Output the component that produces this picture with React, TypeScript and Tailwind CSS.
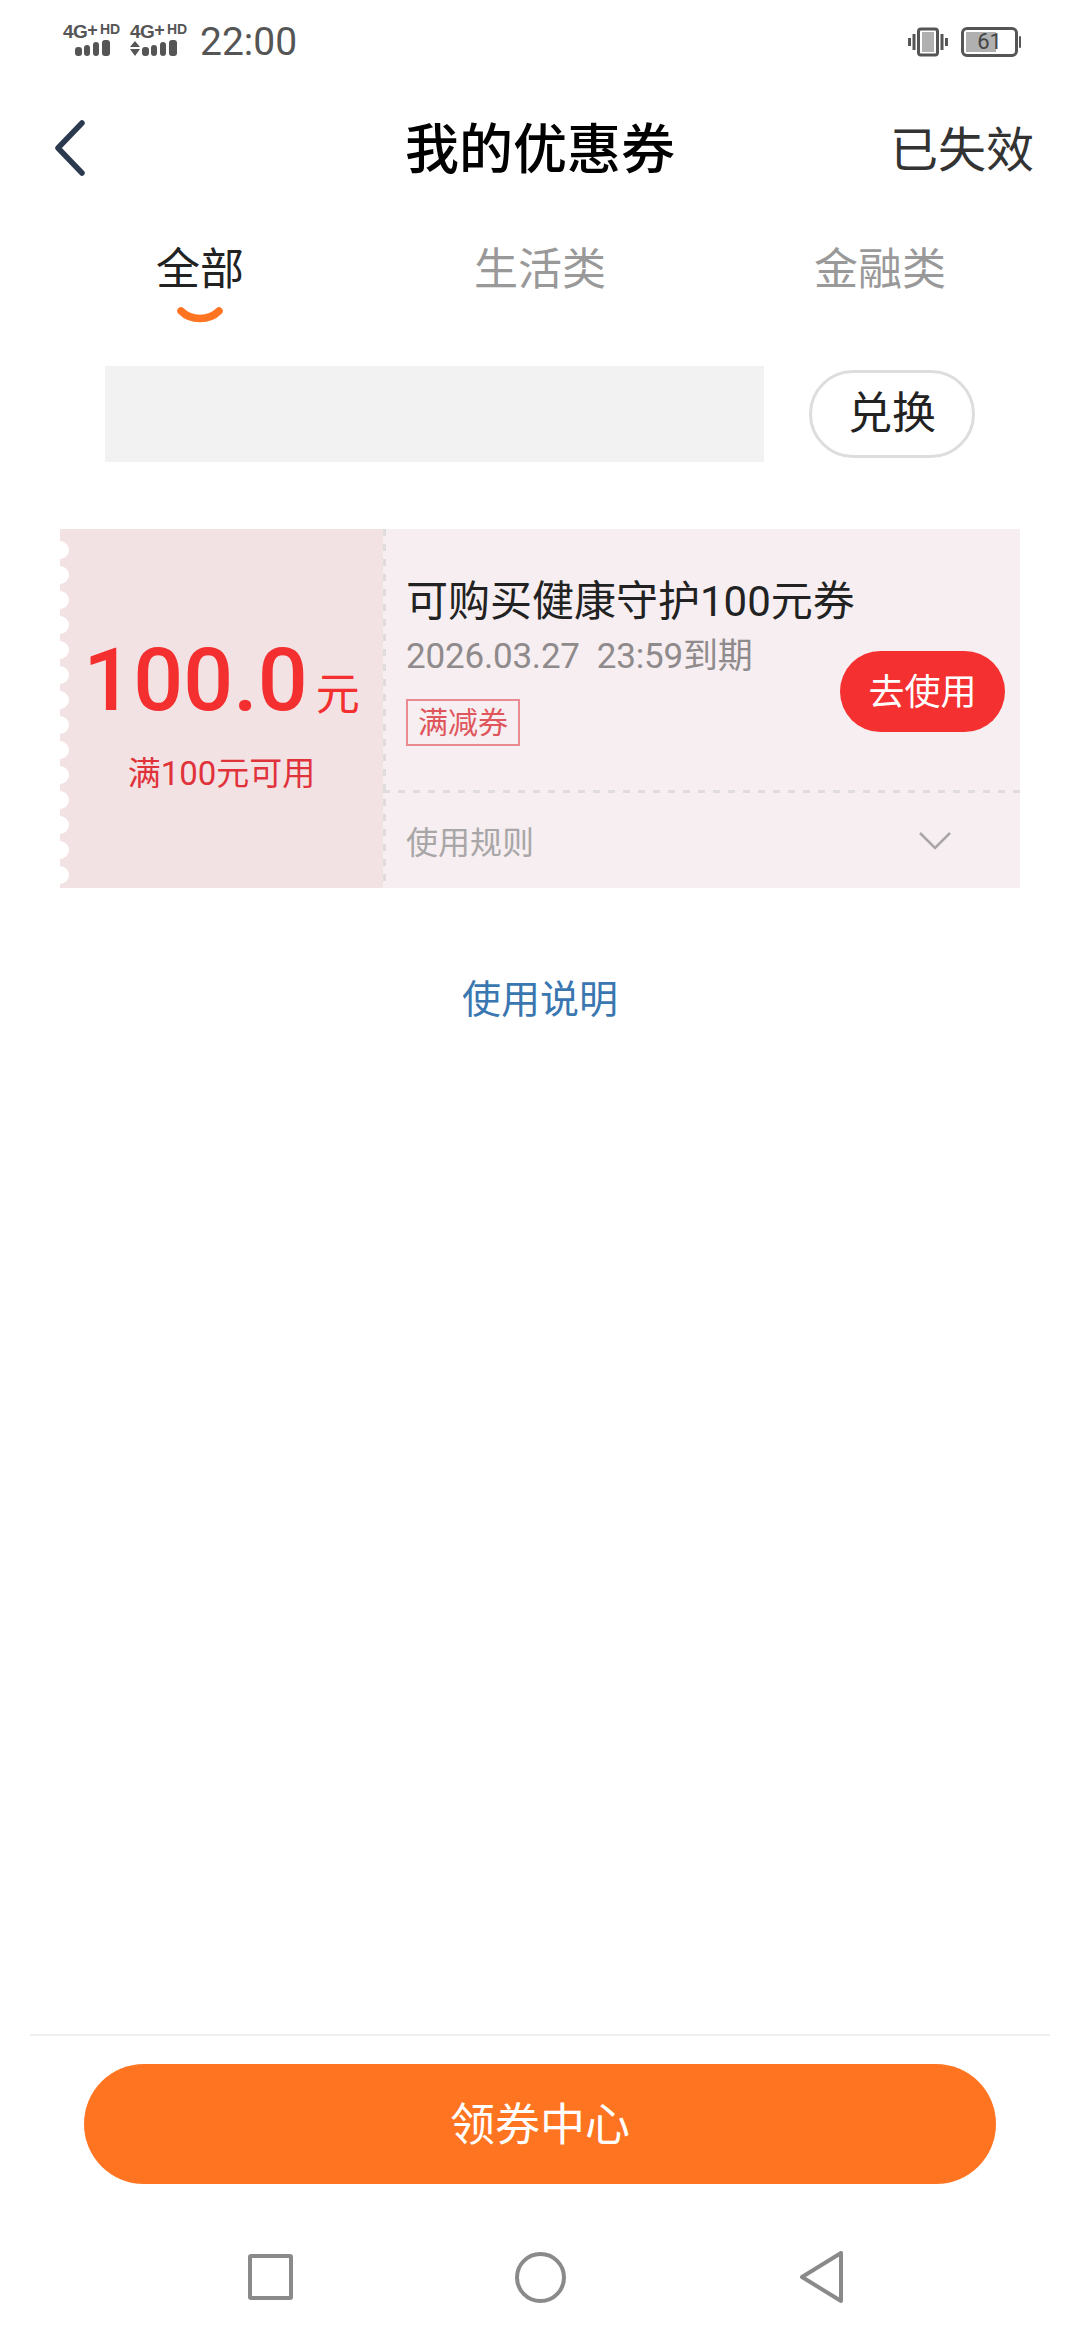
import React from "react";

const FONT = "font-['Roboto','Noto_Sans_CJK_SC',sans-serif]";

function Signal({ arrows }: { arrows?: boolean }) {
  return (
    <div className="flex flex-col items-start w-[58px] mt-[-4px]">
      <div className="flex items-start h-[16px] leading-none font-['Liberation_Sans',sans-serif] font-bold text-[#555555]">
        <span className="text-[19px] tracking-[-0.5px] mt-[-2px]">4G</span>
        <span className="text-[18px] mt-[-3px]">+</span>
        <span className="text-[14px] ml-[2px] mt-[-2px]">HD</span>
      </div>
      <svg width="58" height="16" viewBox="0 0 58 16" fill="#555555">
        {arrows && <path d="M5 1l5 6H0zM5 16l5-7H0z" />}
        <rect x="12" y="7" width="7" height="9" rx="3" />
        <rect x="21" y="5" width="6" height="11" rx="3" />
        <rect x="30" y="2" width="6" height="14" rx="3" />
        <rect x="39" y="0" width="8" height="16" rx="3" />
      </svg>
    </div>
  );
}

function Tab({ label, active }: { label: string; active?: boolean }) {
  return (
    <div className="flex flex-col items-center">
      <span className={`text-[44px] leading-[60px] ${active ? "text-[#222222]" : "text-[#999999]"}`}>{label}</span>
      {active && (
        <svg width="46" height="18" viewBox="0 0 46 18" className="mt-[7px]">
          <path d="M4 4C14 14 32 14 42 4" fill="none" stroke="#ff7420" strokeWidth="7.5" strokeLinecap="round" />
        </svg>
      )}
    </div>
  );
}

export default function App() {
  const scallops = Array.from({ length: 14 }, (_, i) => i);
  return (
    <div className={`${FONT} flex flex-col h-[2340px] w-[1080px] bg-white overflow-hidden`}>
      {/* Status bar */}
      <div className="flex items-center justify-between h-[84px] pl-[63px] pr-[59px]">
        <div className="flex items-center">
          <Signal />
          <div className="ml-[9px]">
            <Signal arrows />
          </div>
          <span className="ml-[12px] text-[39px] leading-none text-[#555555]">22:00</span>
        </div>
        <div className="flex items-center gap-[13px]">
          <svg width="40" height="30" viewBox="0 0 40 30" fill="none">
            <rect x="10.5" y="2" width="19" height="26" rx="2.5" stroke="#555555" strokeWidth="3" />
            <rect x="14" y="5" width="12" height="20" fill="#b0b0b0" />
            <path d="M1.5 11v8M6 7v16M34 7v16M38.5 11v8" stroke="#555555" strokeWidth="3" />
          </svg>
          <div className="relative flex items-center">
            <div className="relative w-[57px] h-[30px] rounded-[6px] border-[3px] border-[#555555] p-[2px] overflow-hidden">
              <div className="h-full w-[30px] bg-[#b0b0b0]" />
              <span className="absolute inset-0 flex items-center justify-center text-[22px] leading-none text-[#444444]">61</span>
            </div>
            <div className="ml-[1px] w-[2px] h-[12px] bg-[#555555] rounded-full" />
          </div>
        </div>
      </div>

      {/* Header */}
      <div className="relative flex items-center justify-between h-[128px] pl-[54px] pr-[46px]">
        <svg width="32" height="56" viewBox="0 0 32 56" fill="none">
          <path d="M28 3L4 28L28 53" stroke="#2c3a50" strokeWidth="5.5" strokeLinecap="round" strokeLinejoin="round" />
        </svg>
        <span className="absolute left-0 right-0 mt-[5px] text-center text-[54px] leading-[70px] font-medium text-black">我的优惠券</span>
        <span className="mt-[5px] text-[48px] leading-[64px] text-[#333333]">已失效</span>
      </div>

      {/* Tabs */}
      <div className="grid grid-cols-3 w-[1020px] ml-[30px] h-[154px] pt-[28px]">
        <Tab label="全部" active />
        <Tab label="生活类" />
        <Tab label="金融类" />
      </div>

      {/* Exchange row */}
      <div className="flex items-center h-[96px] pl-[105px]">
        <div className="w-[659px] h-[96px] bg-[#f2f2f2]" />
        <button className="ml-[45px] w-[166px] h-[88px] rounded-full border-[3px] border-[#dddddd] flex items-center justify-center text-[44px] leading-none text-[#222222]">
          兑换
        </button>
      </div>

      {/* Coupon */}
      <div className="flex w-[960px] h-[359px] ml-[60px] mt-[67px] bg-[#f6eef0]">
        <div className="relative w-[323px] shrink-0 bg-[#f3e2e4] flex flex-col items-center pt-[95px]">
          <div className="absolute left-[-9px] top-[12px] flex flex-col gap-[7px]">
            {scallops.map((i) => (
              <div key={i} className="w-[18px] h-[18px] rounded-full bg-white" />
            ))}
          </div>
          <div className="flex items-baseline leading-none text-[#f32f2f]">
            <span className="text-[88px] leading-[112px] font-medium">100.0</span>
            <span className="text-[44px] ml-[8px]">元</span>
          </div>
          <span className="mt-[15px] text-[33px] leading-[46px] text-[#e0323a]">满100元可用</span>
        </div>
        <div className="w-[3px] shrink-0 bg-[repeating-linear-gradient(180deg,#e0dcdd_0_7px,transparent_7px_15px)]" />
        <div className="flex-1 flex flex-col">
          <div className="relative h-[261px] pl-[20px] pt-[48px]">
            <div className="text-[42px] leading-[50px] text-[#222222]">可购买健康守护100元券</div>
            <div className="mt-[8px] text-[35px] tracking-[-0.2px] leading-[44px] text-[#8f8a8b] whitespace-pre">2026.03.27  23:59到期</div>
            <div className="mt-[20px] w-[114px] h-[47px] border-[2px] border-[#e88a90] flex items-center justify-center text-[30px] leading-none text-[#e0555c]">
              满减券
            </div>
            <button className="absolute right-[15px] top-[122px] w-[165px] h-[81px] rounded-full bg-[#f53030] flex items-center justify-center pt-[2px] text-[36px] leading-none text-white">
              去使用
            </button>
          </div>
          <div className="h-[3px] ml-[-3px] bg-[repeating-linear-gradient(90deg,#e0dcdd_0_7px,transparent_7px_15px)]" />
          <div className="flex-1 flex items-center justify-between pt-[4px] pl-[20px] pr-[69px]">
            <span className="text-[32px] leading-none text-[#a8a6a7]">使用规则</span>
            <svg width="32" height="18" viewBox="0 0 32 18" fill="none" className="mt-[-4px]">
              <path d="M1 1L16 16L31 1" stroke="#aaa5a6" strokeWidth="2.5" />
            </svg>
          </div>
        </div>
      </div>

      {/* Instructions */}
      <div className="mt-[87px] text-center text-[39px] leading-[50px] text-[#3a77b0]">使用说明</div>

      {/* Bottom */}
      <div className="mt-auto">
        <div className="h-[2px] mx-[30px] bg-[#eeeeee]" />
        <div className="mx-[84px] mt-[28px] h-[120px] rounded-full bg-[#ff7420] flex items-center justify-center pt-[2px] text-[45px] leading-none text-white">
          领券中心
        </div>
        <div className="flex items-center h-[156px] pt-[30px] pl-[248px]">
          <div className="w-[45px] h-[46px] rounded-[3px] border-[4px] border-[#8a8a8a]" />
          <div className="ml-[222px] w-[51px] h-[51px] rounded-full border-[4px] border-[#8a8a8a]" />
          <svg width="45" height="52" viewBox="0 0 45 52" fill="none" className="ml-[233px]">
            <path d="M3 26L42 2V50Z" stroke="#8a8a8a" strokeWidth="4" strokeLinejoin="round" />
          </svg>
        </div>
      </div>
    </div>
  );
}
